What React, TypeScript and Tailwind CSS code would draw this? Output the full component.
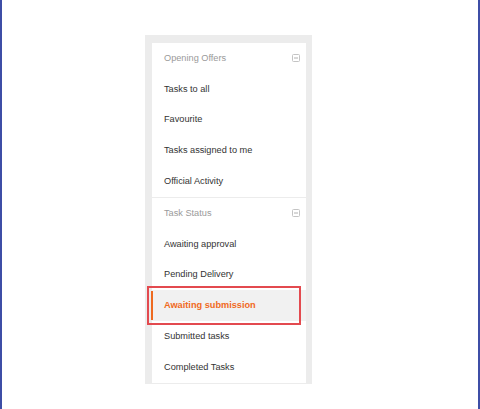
import React from "react";

const MinusBox = () => (
  <svg width="8" height="8" viewBox="0 0 8 8" className="shrink-0">
    <rect x="0.5" y="0.5" width="7" height="7" rx="1" fill="none" stroke="#c4c4c4" strokeWidth="1" />
    <line x1="2" y1="4" x2="6" y2="4" stroke="#b0b0b0" strokeWidth="1" />
  </svg>
);

const Header = ({ label }: { label: string }) => (
  <div className="h-[30.8px] flex items-center justify-between pl-[12px] pr-[6px] text-[#9a9a9a]">
    <span>{label}</span>
    <MinusBox />
  </div>
);

const Item = ({ label, active }: { label: string; active?: boolean }) => (
  <div className={`relative h-[30.8px] flex items-center pl-[12px] ${active ? "bg-[#f1f1f1]" : ""}`}>
    {active && (
      <>
        <div className="absolute left-[-1px] top-[1px] bottom-[1px] w-[2px] bg-[#ee6a20]" />
        <div className="absolute left-[-5px] right-[5px] top-[-4px] bottom-[-4px] border-[2px] border-[#e34a4f]" />
      </>
    )}
    <span className={active ? "font-bold text-[#f06a1e]" : "text-[#333333]"}>{label}</span>
  </div>
);

export default function App() {
  return (
    <div
      className="w-[480px] h-[409px] bg-white border-l-2 border-r-2 border-[#3d4ea6] overflow-hidden"
      style={{ fontFamily: '"Liberation Sans", Arial, sans-serif' }}
    >
      <div className="ml-[143px] mt-[35px] w-[167px] h-[349px] bg-[#ececec] pl-[7px] pr-[6px] pt-[8px] pb-[1px]">
        <div className="bg-white h-full text-[9.2px] leading-none">
          <Header label="Opening Offers" />
          <Item label="Tasks to all" />
          <Item label="Favourite" />
          <Item label="Tasks assigned to me" />
          <Item label="Official Activity" />
          <div className="h-px bg-[#ececec]" />
          <Header label="Task Status" />
          <Item label="Awaiting approval" />
          <Item label="Pending Delivery" />
          <Item label="Awaiting submission" active />
          <Item label="Submitted tasks" />
          <Item label="Completed Tasks" />
        </div>
      </div>
    </div>
  );
}
